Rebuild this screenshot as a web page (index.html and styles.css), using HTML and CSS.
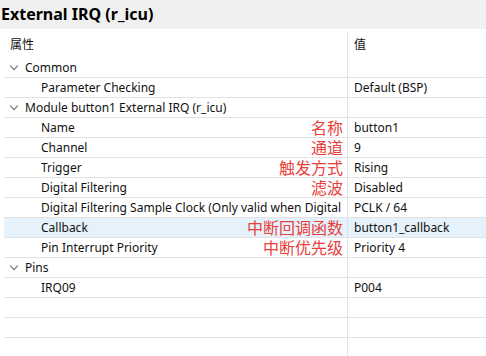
FILE: index.html
```html
<!DOCTYPE html>
<html lang="zh">
<head>
  <meta charset="UTF-8" />
  <title>External IRQ (r_icu)</title>
  <link rel="stylesheet" href="styles.css">
</head>
<body>

  <!-- View title -->
  <div class="title-bar">External IRQ (r_icu)</div>

  <!-- Property table -->
  <div class="props">
    <div class="head">
      <div class="cell name">属性</div>
      <div class="cell value">值</div>
    </div>

    <div class="row">
      <div class="cell name lvl0"><span class="chev"></span><span class="label">Common</span></div>
      <div class="cell value"></div>
    </div>
    <div class="row">
      <div class="cell name lvl1"><span class="label">Parameter Checking</span></div>
      <div class="cell value">Default (BSP)</div>
    </div>
    <div class="row">
      <div class="cell name lvl0"><span class="chev"></span><span class="label">Module button1 External IRQ (r_icu)</span></div>
      <div class="cell value"></div>
    </div>
    <div class="row">
      <div class="cell name lvl1"><span class="label">Name</span><span class="note">名称</span></div>
      <div class="cell value">button1</div>
    </div>
    <div class="row">
      <div class="cell name lvl1"><span class="label">Channel</span><span class="note">通道</span></div>
      <div class="cell value">9</div>
    </div>
    <div class="row">
      <div class="cell name lvl1"><span class="label">Trigger</span><span class="note">触发方式</span></div>
      <div class="cell value">Rising</div>
    </div>
    <div class="row">
      <div class="cell name lvl1"><span class="label">Digital Filtering</span><span class="note">滤波</span></div>
      <div class="cell value">Disabled</div>
    </div>
    <div class="row">
      <div class="cell name lvl1"><span class="label">Digital Filtering Sample Clock (Only valid when Digital Filtering is Enabled)</span></div>
      <div class="cell value">PCLK / 64</div>
    </div>
    <div class="row selected">
      <div class="cell name lvl1"><span class="label">Callback</span><span class="note">中断回调函数</span></div>
      <div class="cell value">button1_callback</div>
    </div>
    <div class="row">
      <div class="cell name lvl1"><span class="label">Pin Interrupt Priority</span><span class="note">中断优先级</span></div>
      <div class="cell value">Priority 4</div>
    </div>
    <div class="row">
      <div class="cell name lvl0"><span class="chev"></span><span class="label">Pins</span></div>
      <div class="cell value"></div>
    </div>
    <div class="row">
      <div class="cell name lvl1"><span class="label">IRQ09</span></div>
      <div class="cell value">P004</div>
    </div>
    <div class="row"><div class="cell name"></div><div class="cell value"></div></div>
    <div class="row"><div class="cell name"></div><div class="cell value"></div></div>
    <div class="row last"><div class="cell name"></div><div class="cell value"></div></div>
  </div>

</body>
</html>
```

FILE: styles.css
```css
body {
  margin: 0;
  font-family: "Noto Sans", "Noto Sans CJK SC", sans-serif;
  font-size: 12px;
  color: #111;
  background: #fff;
  overflow: hidden;
}

/* Title strip */
.title-bar {
  height: 29px;
  line-height: 28px;
  padding-left: 1px;
  background: #f0f0f0;
  font-size: 16px;
  font-weight: bold;
  color: #000;
}

/* Table */
.props {
  margin-left: 4px;
}

.head, .row {
  display: grid;
  grid-template-columns: 343px 1fr;
}

.head {
  height: 29px;
  padding-top: 4px;
  box-sizing: border-box;
}

.head .cell {
  line-height: 24px;
  align-items: flex-start;
}

.row {
  height: 20px;
  box-sizing: border-box;
  border-bottom: 1px solid #e2e2e2;
}

.row.last {
  border-bottom: none;
}

.row.selected {
  background: #e5f1fb;
}

.cell {
  display: flex;
  align-items: center;
  min-width: 0;
  overflow: hidden;
  white-space: nowrap;
}

.name {
  padding-left: 6px;
  padding-right: 4px;
}

.value {
  border-left: 1px solid #e2e2e2;
  padding-left: 6px;
}

.lvl1 {
  padding-left: 37px;
}

.label {
  flex: 1;
  min-width: 0;
  overflow: hidden;
}

/* Expand chevron */
.chev {
  width: 5px;
  height: 5px;
  border-right: 1.3px solid #666;
  border-bottom: 1.3px solid #666;
  transform: rotate(45deg);
  margin: -3px 8px 0 1px;
  flex: none;
}

/* Red annotations */
.note {
  flex: none;
  color: #e8413c;
  font-size: 16px;
  line-height: 20px;
}
```
